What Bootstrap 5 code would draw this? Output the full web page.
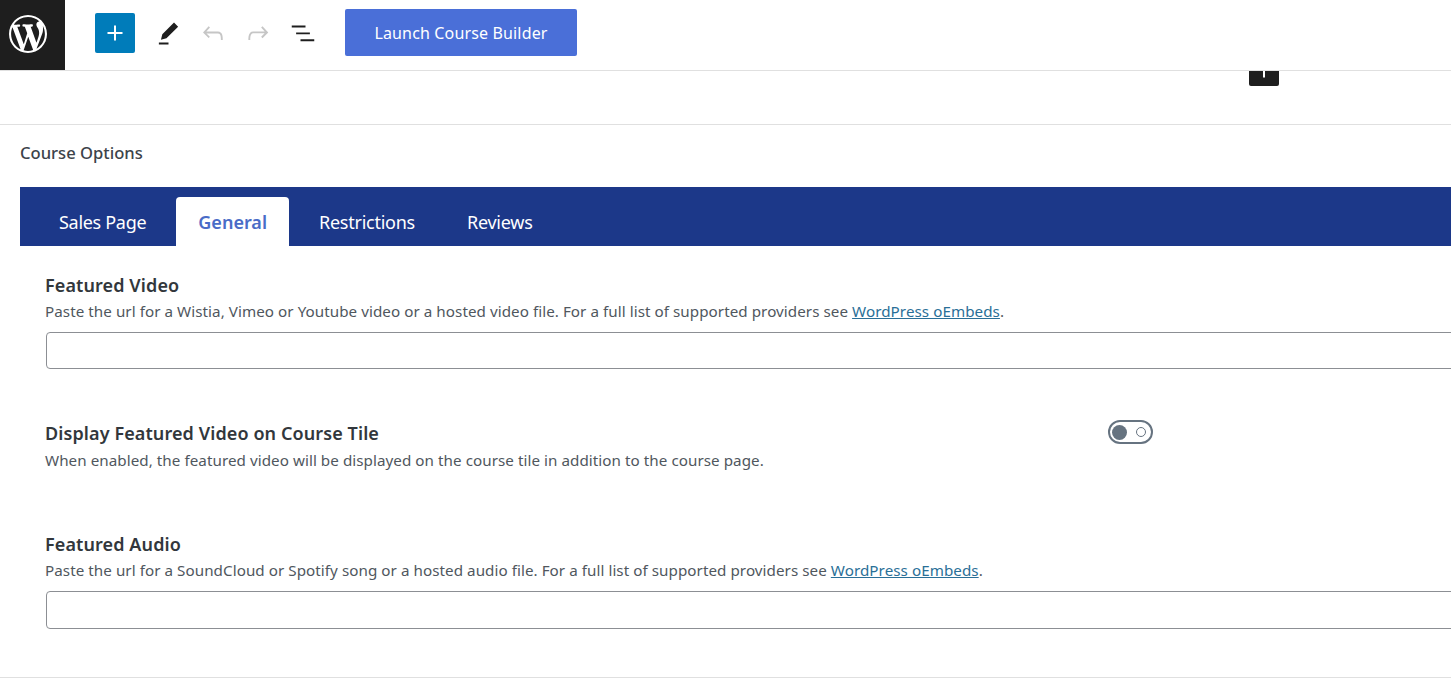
<!DOCTYPE html>
<html lang="en">
<head>
<meta charset="utf-8">
<title>Course Options</title>
<link href="https://cdn.jsdelivr.net/npm/bootstrap@5.3.0/dist/css/bootstrap.min.css" rel="stylesheet">
<style>
html,body{height:695px;overflow:hidden;background:#fff}
body{font-family:"Noto Sans","Open Sans",sans-serif;color:#3c434a;font-size:14px}
.wp-bar{height:71px;border-bottom:1px solid #e0e0e0;background:#fff}
.wp-logo{width:65px;height:70px;background:#1e1e1e;padding:0 18px 3px 9px}
.wp-logo svg{width:38px;height:38px;fill:#fff;flex-shrink:0}
.wp-tools{height:66px}
.wp-add{width:40px;height:40px;background:#007cba;border-radius:2px;margin-left:30px;margin-right:10px;border:0;padding:0}
.wp-add svg{fill:#fff;width:30px;height:30px}
.wp-tool{width:45px;height:40px;border:0;padding:0;background:none}
.wp-tool svg{width:30px;height:30px;fill:#1e1e1e}
.wp-tool.is-pencil svg{width:33px;height:33px;margin-left:1px}
.wp-tool.is-off svg{fill:#c6c6c6}
.wp-launch{width:232px;height:47px;margin:-1px 0 0 20px;background:#4a6fd8;color:#fff;border:0;border-radius:2px;font-size:16px;letter-spacing:.15px}
.block-strip{height:54px;border-bottom:1px solid #e0e0e0;padding-right:172px}
.block-add{width:30px;height:15px;background:#1e1e1e;border-radius:0 0 2px 2px;overflow:hidden}
.block-add svg{display:block;width:30px;height:30px;fill:#fff;margin:-16px auto 0}
.opts-title{font-size:16.6px;font-weight:500;color:#3c434a;line-height:22px;margin:17px 0 23px 20px}
.tab-bar{margin-left:20px;height:59px;background:#1c3889;padding:10px 0 0 13px}
.tab-item{font-size:18px;line-height:50px;height:49px;color:#fff;padding:0 26px;letter-spacing:-.25px;text-decoration:none}
.tab-item.is-on{background:#fff;color:#4a6cc7;font-weight:600;border-radius:4px 4px 0 0;padding:0 22px;margin-right:4px;letter-spacing:0}
.tab-item.first{padding:0 30px 0 26px;letter-spacing:-.3px}
.opts-body{padding-left:45px;width:1500px}
.fld-name{font-size:18px;font-weight:600;line-height:24px;color:#32373c;letter-spacing:.1px}
.fld-help{font-size:15.2px;line-height:20px;color:#50575e;margin-top:4px;letter-spacing:.055px}
.fld-help.is-low{margin-top:5px}
.fld-help a{color:#2a6f97}
.fld-input{height:37px;border:1px solid #8c8f94;border-radius:4px;margin-top:11px;margin-left:1px}
.fld-input.is-tall{height:38px}
.sec-one{padding-top:27px}
.sec-two{padding-top:52px;width:1108px}
.sec-three{padding-top:62px}
.wp-toggle{width:45px;height:24px;border:2px solid #667380;border-radius:12px;padding:0 5px 0 2px;margin-top:-1px}
.wp-toggle i{display:block;width:15px;height:15px;border-radius:50%;background:#667380}
.wp-toggle b{display:block;width:10px;height:10px;border-radius:50%;border:1px solid #667380}
.page-end{border-top:1px solid #e0e0e0;height:20px;margin-top:48px}
</style>
</head>
<body>
<header class="wp-bar d-flex align-items-start">
  <div class="wp-logo d-flex align-items-center">
    <svg viewBox="0 0 20 20"><path d="M20 10c0-5.51-4.49-10-10-10C4.48 0 0 4.49 0 10c0 5.52 4.48 10 10 10 5.51 0 10-4.48 10-10zM7.78 15.37L4.37 6.22c.55-.02 1.17-.08 1.17-.08.5-.06.44-1.13-.06-1.11 0 0-1.45.11-2.37.11-.18 0-.37 0-.58-.01C4.12 2.69 6.87 1.11 10 1.11c2.33 0 4.45.87 6.05 2.34-.68-.11-1.65.39-1.65 1.58 0 .74.45 1.36.9 2.1.35.61.55 1.36.55 2.46 0 1.49-1.4 5-1.4 5l-3.03-8.37c.54-.02.82-.17.82-.17.5-.05.44-1.25-.06-1.22 0 0-1.44.12-2.38.12-.87 0-2.33-.12-2.33-.12-.5-.03-.56 1.2-.06 1.22l.92.08 1.26 3.41zM17.41 10c.24-.64.74-1.87.43-4.25.7 1.29 1.05 2.71 1.05 4.25 0 3.29-1.73 6.24-4.4 7.78.97-2.59 1.94-5.2 2.92-7.78zM6.1 18.09C3.12 16.65 1.11 13.53 1.11 10c0-1.3.23-2.48.72-3.59C3.25 10.3 4.67 14.2 6.1 18.09zm4.03-6.63l2.58 6.98c-.86.29-1.76.45-2.71.45-.79 0-1.57-.11-2.29-.33.81-2.38 1.62-4.74 2.42-7.1z"/></svg>
  </div>
  <div class="wp-tools d-flex align-items-center">
    <button class="wp-add d-flex align-items-center justify-content-center" aria-label="Add block"><svg viewBox="0 0 24 24"><path d="M18 11.2h-5.2V6h-1.6v5.2H6v1.6h5.2V18h1.6v-5.2H18z"/></svg></button>
    <button class="wp-tool is-pencil" aria-label="Tools"><svg viewBox="0 0 24 24"><path d="m19 7-3-3-8.5 8.5-1 4 4-1L19 7Zm-7 11.5H5V20h7v-1.5Z"/></svg></button>
    <button class="wp-tool is-off" aria-label="Undo"><svg viewBox="0 0 24 24"><path d="M18.3 11.7c-.6-.6-1.4-.9-2.3-.9H6.7l2.9-3.3-1.1-1-4.5 5L8.5 16l1-1-2.7-2.7H16c.5 0 .9.2 1.3.5 1 1 1 3.4 1 4.5v.3h1.5v-.2c0-1.5 0-4.3-1.5-5.7z"/></svg></button>
    <button class="wp-tool is-off" aria-label="Redo"><svg viewBox="0 0 24 24"><path d="M15.6 6.5l-1.1 1 2.9 3.3H8c-.9 0-1.7.3-2.3.9-1.4 1.5-1.4 4.2-1.4 5.6v.2h1.5v-.3c0-1.1 0-3.5 1-4.5.3-.3.7-.5 1.3-.5h9.2L14.5 15l1.1 1.1 4.6-4.6-4.6-5z"/></svg></button>
    <button class="wp-tool" aria-label="List view"><svg viewBox="0 0 24 24"><path d="M3 6h11v1.5H3V6zm3.5 5.5h11V13h-11v-1.5zM21 17H10v1.5h11V17z"/></svg></button>
    <button class="wp-launch">Launch Course Builder</button>
  </div>
</header>
<div class="block-strip d-flex justify-content-end align-items-start">
  <div class="block-add"><svg viewBox="0 0 24 24"><path d="M18 11.2h-5.2V6h-1.6v5.2H6v1.6h5.2V18h1.6v-5.2H18z"/></svg></div>
</div>
<div class="opts-title">Course Options</div>
<nav class="tab-bar d-flex align-items-start">
  <a class="tab-item first" href="#">Sales Page</a>
  <a class="tab-item is-on" href="#">General</a>
  <a class="tab-item" href="#">Restrictions</a>
  <a class="tab-item" href="#">Reviews</a>
</nav>
<main class="opts-body">
  <section class="sec-one">
    <div class="fld-name">Featured Video</div>
    <div class="fld-help">Paste the url for a Wistia, Vimeo or Youtube video or a hosted video file. For a full list of supported providers see <a href="#">WordPress oEmbeds</a>.</div>
    <div class="fld-input"></div>
  </section>
  <section class="sec-two d-flex justify-content-between">
    <div>
      <div class="fld-name">Display Featured Video on Course Tile</div>
      <div class="fld-help is-low">When enabled, the featured video will be displayed on the course tile in addition to the course page.</div>
    </div>
    <div class="wp-toggle d-flex align-items-center justify-content-between flex-shrink-0"><i></i><b></b></div>
  </section>
  <section class="sec-three">
    <div class="fld-name">Featured Audio</div>
    <div class="fld-help">Paste the url for a SoundCloud or Spotify song or a hosted audio file. For a full list of supported providers see <a href="#">WordPress oEmbeds</a>.</div>
    <div class="fld-input is-tall"></div>
  </section>
</main>
<div class="page-end"></div>
</body>
</html>
